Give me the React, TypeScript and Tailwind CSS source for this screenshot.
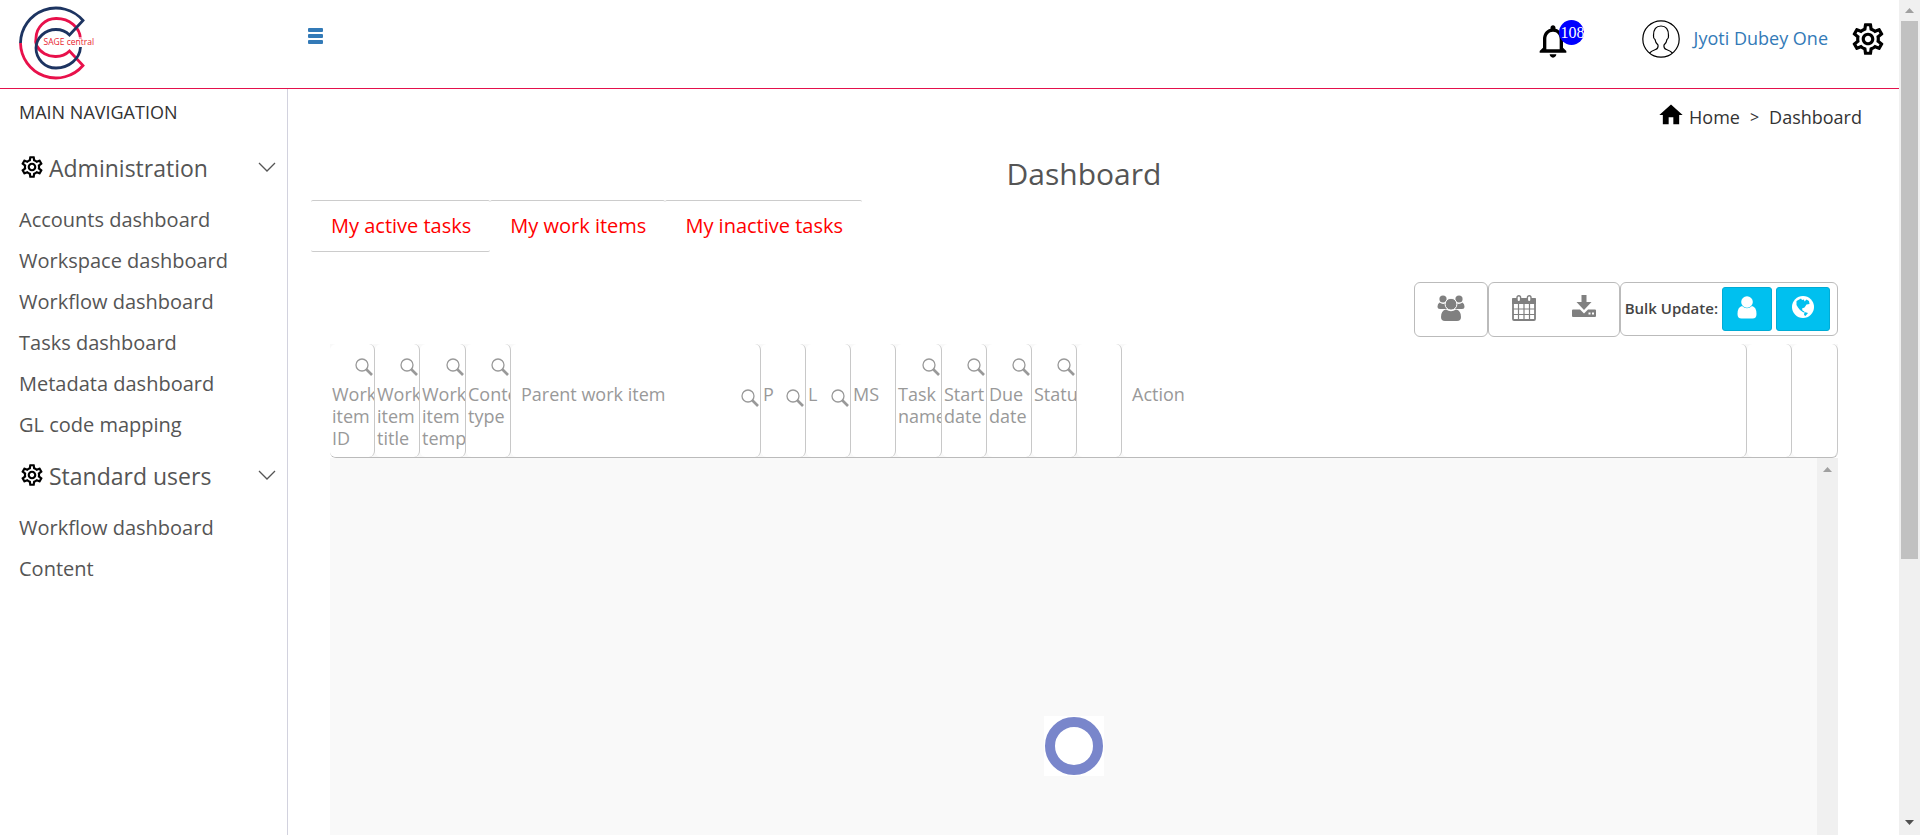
import React from "react";
import { MdOutlineSettings, MdNotificationsNone, MdHome } from "react-icons/md";

const NAV = [
  {
    title: "Administration",
    items: [
      "Accounts dashboard",
      "Workspace dashboard",
      "Workflow dashboard",
      "Tasks dashboard",
      "Metadata dashboard",
      "GL code mapping",
    ],
  },
  { title: "Standard users", items: ["Workflow dashboard", "Content"] },
];

type Column = { label: string; search?: "above" | "inline"; width: string; pad?: string };

const COLUMNS: Column[] = [
  { label: "Work item ID", search: "above", width: "w-[45px]" },
  { label: "Work item title", search: "above", width: "w-[45px]" },
  { label: "Work item template", search: "above", width: "w-[46px]" },
  { label: "Content type", search: "above", width: "w-[45px]" },
  { label: "Parent work item", search: "inline", width: "w-[250px]", pad: "pl-2.5" },
  { label: "P", search: "inline", width: "w-[45px]" },
  { label: "L", search: "inline", width: "w-[45px]" },
  { label: "MS", width: "w-[45px]" },
  { label: "Task name", search: "above", width: "w-[46px]" },
  { label: "Start date", search: "above", width: "w-[45px]" },
  { label: "Due date", search: "above", width: "w-[45px]" },
  { label: "Status", search: "above", width: "w-[45px]" },
  { label: "", width: "w-[45px]" },
  { label: "Action", width: "w-auto", pad: "pl-2.5" },
  { label: "", width: "w-[45px]" },
  { label: "", width: "w-[46px]" },
];

function Logo() {
  return (
    <svg width="76" height="78" viewBox="0 0 76 78" fill="none" strokeWidth="2.8" role="img" aria-label="SAGE central">
      <path d="M62.500 35A24 21 0 0 0 38 14.500A20 20 0 0 0 18 34Q17 38 18.500 41.500A21 20 0 0 0 38 52.500Q46 52.500 51.500 47L65 61.500A35.500 35.500 0 0 1 2.500 39" stroke="#e8114b" />
      <path d="M62.500 43A24.500 22 0 0 1 38 64A20 20 0 0 1 18 44A20 19 0 0 1 38 25.500Q46 25.500 51.500 31L65 16.500A35.500 35.500 0 0 0 2.500 39" stroke="#1d3461" />
      <rect x="25" y="33" width="51" height="10" fill="#fff" fillOpacity=".6" />
      <text x="25.500" y="41" fontSize="8.500" fill="#e8232f" fontFamily="'Open Sans', sans-serif">SAGE central</text>
    </svg>
  );
}

function SearchIcon() {
  return (
    <svg width="18" height="18" viewBox="0 0 18 18" fill="none" stroke="#999" aria-hidden="true">
      <circle cx="7" cy="7" r="6" strokeWidth="1.300" />
      <path d="M11 11L17 17" strokeWidth="2.600" />
    </svg>
  );
}

function UsersIcon() {
  return (
    <svg width="28" height="26" viewBox="0 0 28 26" fill="#808080" aria-hidden="true">
      <circle cx="6" cy="4" r="3.600" />
      <circle cx="22" cy="4" r="3.600" />
      <path d="M2.500 7.500q3.500 2.500 6 .5Q8 11.500 10 14H3Q.5 14 .5 11.500T2.500 7.500zM25.500 7.500q-3.500 2.500-6 .5Q20 11.500 18 14h7q2.500 0 2.500-2.500t-2-4z" />
      <circle cx="14" cy="9.200" r="5.900" stroke="#fff" strokeWidth="1" />
      <path d="M9 14.500q5 3.500 10 0 5 1 5 7.500 0 4-4 4H8q-4 0-4-4 0-6.500 5-7.500z" />
    </svg>
  );
}

function CalendarIcon() {
  return (
    <svg width="24" height="26" viewBox="0 0 24 26" fill="none" stroke="#808080" aria-hidden="true">
      <rect x="1" y="4" width="22" height="21" rx="1" strokeWidth="1.800" />
      <path d="M0 4Q0 3 1 3H23Q24 3 24 4V9H0z" fill="#808080" stroke="none" />
      <path d="M6.500 9V25M12 9V25M17.500 9V25M1 14H23M1 19.500H23" strokeWidth="1.200" />
      <rect x="5" y=".7" width="3.600" height="6" rx="1.800" fill="#fff" strokeWidth="1.400" />
      <rect x="15.400" y=".7" width="3.600" height="6" rx="1.800" fill="#fff" strokeWidth="1.400" />
    </svg>
  );
}

function DownloadIcon() {
  return (
    <svg width="24" height="22" viewBox="0 0 24 22" fill="#808080" aria-hidden="true">
      <path d="M9.500 0h5v7h5L12 15 4.500 7h5z" />
      <path d="M1 14.500h7l4 4 4-4h7q1 0 1 1V21q0 1-1 1H1q-1 0-1-1v-5.500q0-1 1-1zM16.500 17.500v2h2v-2zm3.500 0v2h2v-2z" fillRule="evenodd" />
    </svg>
  );
}

function UserIcon() {
  return (
    <svg width="20" height="23" viewBox="0 0 20 23" fill="#fff" aria-hidden="true">
      <circle cx="10" cy="6" r="5.800" />
      <path d="M5 10q5 4.500 10 0 4.500 1 4.500 8 0 4.500-4 4.500h-11Q.5 22.500.5 18 .5 11 5 10z" />
    </svg>
  );
}

function GlobeIcon() {
  return (
    <svg width="22" height="22" viewBox="0 0 22 22" aria-hidden="true">
      <circle cx="11" cy="11" r="11" fill="#fff" />
      <path d="M4.500 5L9 2.500l1 1.500 2-.5.5 2 2-2 2.500 1.500.5 3-3 .5-2 3-2.500 1 .5 2 2 1-1 1-3.500-2.500L6 11.500 4.500 9z" fill="#00c0ef" />
      <path d="M12.500 16l3.500 1-2.500 3-1.500-1z" fill="#00c0ef" />
    </svg>
  );
}

function Avatar() {
  return (
    <svg width="38" height="38" viewBox="0 0 38 38" fill="none" stroke="#000" strokeWidth="1.200" aria-hidden="true">
      <circle cx="19" cy="19" r="18.200" />
      <path d="M7.500 33q2-2 6-3.500 3-1 2.500-4.500-2.500-2-3-5.500-1.800-1-1.500-4 0-9.500 7.500-9.500t7.500 9.500q.3 3-1.500 4-.5 3.500-3 5.500-.5 3.500 2.500 4.500 4 1.500 6 3.500" />
    </svg>
  );
}

function Sidebar() {
  return (
    <nav className="w-72 shrink-0 border-r border-[#d2d2de] pl-[19px] pr-[11px]">
      <h2 className="pt-[11px] text-lg leading-6 text-[#333]">MAIN NAVIGATION</h2>
      <div className="pt-[13px]">
        {NAV.map((group) => (
          <section key={group.title}>
            <button type="button" className="flex h-[62px] w-full items-center text-[23px] text-[#555]">
              <MdOutlineSettings className="-mt-0.5 size-[26px] text-black" />
              <span className="ml-1">{group.title}</span>
              <svg className="-mt-0.5 ml-auto" width="18" height="10" viewBox="0 0 18 10" fill="none" stroke="#555" strokeWidth="1.300" aria-hidden="true">
                <path d="M1 1L9 9L17 1" />
              </svg>
            </button>
            <ul>
              {group.items.map((item) => (
                <li key={item}>
                  <a href="#" className="flex h-[41px] items-center text-xl text-[#555]">{item}</a>
                </li>
              ))}
            </ul>
          </section>
        ))}
      </div>
    </nav>
  );
}

function Toolbar() {
  return (
    <div className="flex items-start justify-end">
      <div className="flex h-[55px] rounded-md border border-[#bbb] px-[22px] pt-3">
        <button type="button" aria-label="Users" className="flex items-start"><UsersIcon /></button>
      </div>
      <div className="flex h-[55px] gap-9 rounded-md border border-[#bbb] px-[23px] pt-3">
        <button type="button" aria-label="Calendar" className="flex items-start"><CalendarIcon /></button>
        <button type="button" aria-label="Download" className="flex items-start"><DownloadIcon /></button>
      </div>
      <div className="flex h-[54px] items-center gap-1 rounded-md border border-[#bbb] pl-1 pr-[7px]">
        <span className="pb-0.5 text-[15px] font-semibold text-[#444]">Bulk Update:</span>
        <button type="button" aria-label="Assign user" className="flex h-11 w-[50px] items-center justify-center rounded-[3px] border border-[#00acd6] bg-[#00c0ef] pb-1"><UserIcon /></button>
        <button type="button" aria-label="Update region" className="flex h-11 w-[54px] items-center justify-center rounded-[3px] border border-[#00acd6] bg-[#00c0ef] pb-1"><GlobeIcon /></button>
      </div>
    </div>
  );
}

function HeaderCell({ column }: { column: Column }) {
  return (
    <th className="h-[113px] overflow-hidden rounded-md border-r border-[#c8c8c8] bg-white p-0 text-left align-top font-normal">
      <div className={`flex h-[113px] flex-col overflow-hidden ${column.pad ?? "pl-0.5"}`}>
        <div className="flex h-[39px] shrink-0 items-end justify-end pr-px pb-[7px]">
          {column.search === "above" && <SearchIcon />}
        </div>
        <div className="flex items-start justify-between">
          <span className="text-lg leading-[22px]">{column.label}</span>
          {column.search === "inline" && <span className="mr-px mt-1.5"><SearchIcon /></span>}
        </div>
      </div>
    </th>
  );
}

function TaskTable() {
  return (
    <>
      <table className="w-full table-fixed border-separate border-spacing-0 rounded-b-md border-b border-[#bbb] bg-[#f9f9f9] text-[#999]">
        <colgroup>
          {COLUMNS.map((column, i) => (
            <col key={i} className={column.width} />
          ))}
        </colgroup>
        <thead>
          <tr>
            {COLUMNS.map((column, i) => (
              <HeaderCell key={i} column={column} />
            ))}
          </tr>
        </thead>
      </table>
      <div className="flex flex-1 bg-[#f9f9f9]">
        <div className="flex-1 pt-[258px]">
          <div className="mx-auto size-[60px] bg-white p-px">
            <div role="status" aria-label="Loading" className="size-[58px] rounded-full border-10 border-[#7986cb]" />
          </div>
        </div>
        <div className="flex w-[21px] justify-center bg-[#f0f0f0] pt-[9px]">
          <svg width="9" height="5" viewBox="0 0 9 5" fill="#a0a0a0" aria-hidden="true"><path d="M0 5L4.500 0L9 5z" /></svg>
        </div>
      </div>
    </>
  );
}

export default function App() {
  return (
    <div className="flex h-screen overflow-hidden bg-white font-['Open_Sans',sans-serif]">
      <div className="flex min-w-0 flex-1 flex-col">
        <header className="flex h-[89px] shrink-0 items-start border-b border-[#e4114c] pl-[18px] pr-3">
          <div className="pt-1"><Logo /></div>
          <button type="button" aria-label="Toggle menu" className="ml-[214px] mt-7">
            <svg width="15" height="16" viewBox="0 0 15 16" fill="#337ab7" aria-hidden="true">
              <rect width="15" height="4" rx="1" />
              <rect y="6" width="15" height="4" rx="1" />
              <rect y="12" width="15" height="4" rx="1" />
            </svg>
          </button>
          <div className="ml-auto flex items-start">
            <button type="button" aria-label="Notifications, 108 unread" className="relative mt-[21px]">
              <MdNotificationsNone className="size-10" />
              <span className="absolute -top-px left-[26px] flex size-[25px] items-center rounded-full bg-[#0000ff] pl-0.5 font-['Liberation_Serif',serif] text-base leading-none text-white">108</span>
            </button>
            <a href="#" className="ml-[69px] mt-5 flex h-[38px] items-center gap-3.5 text-lg text-[#337ab7]">
              <Avatar />
              <span className="pb-0.5">Jyoti Dubey One</span>
            </a>
            <button type="button" aria-label="Settings" className="ml-[21px] mt-5">
              <MdOutlineSettings className="size-[38px]" />
            </button>
          </div>
        </header>
        <div className="flex min-h-0 flex-1">
          <Sidebar />
          <main className="flex min-w-0 flex-1 flex-col pl-[23px]">
            <ol className="flex items-center justify-end pr-[37px] pt-3.5 text-lg leading-7 text-[#333]">
              <li><a href="#" className="flex items-center gap-1"><MdHome className="-mt-1 size-7 text-black" />Home</a></li>
              <li className="mx-2.5 text-base">&gt;</li>
              <li>Dashboard</li>
            </ol>
            <h1 className="pr-[42px] pt-[23px] text-center text-3xl leading-10 text-[#555]">Dashboard</h1>
            <div className="mr-auto mt-1.5 flex text-xl text-[#ff0000]">
              {["My active tasks", "My work items", "My inactive tasks"].map((tab, i) => (
                <button
                  key={tab}
                  type="button"
                  className={`h-[52px] rounded-xs border-t border-[#ccc] pl-5 pr-[19px] pb-px ${i === 0 ? "border-b" : ""}`}
                >
                  {tab}
                </button>
              ))}
            </div>
            <div className="ml-[19px] mr-[61px] flex min-h-0 flex-1 flex-col pt-[30px]">
              <Toolbar />
              <div className="h-[7px] shrink-0" />
              <TaskTable />
            </div>
          </main>
        </div>
      </div>
      <div aria-hidden="true" className="flex w-[21px] shrink-0 flex-col items-center bg-[#f0f0f0]">
        <div className="flex h-[21px] shrink-0 items-center">
          <svg width="9" height="5" viewBox="0 0 9 5" fill="#a0a0a0"><path d="M0 5L4.500 0L9 5z" /></svg>
        </div>
        <div className="h-[538px] w-[17px] bg-[#c1c1c1]" />
        <div className="mt-auto flex h-[21px] items-center pb-1">
          <svg width="9" height="5" viewBox="0 0 9 5" fill="#505050"><path d="M0 0L4.500 5L9 0z" /></svg>
        </div>
      </div>
    </div>
  );
}
